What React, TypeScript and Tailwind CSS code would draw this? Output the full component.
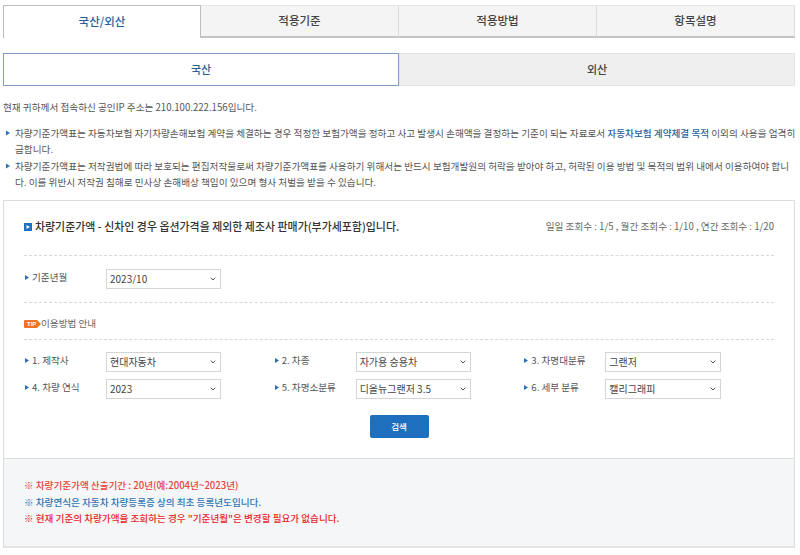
import { ChevronDown } from 'lucide-react';

const font = "font-['Noto_Sans_CJK_KR','Noto_Sans',sans-serif]";

function Arrow() {
  return (
    <svg width="4" height="6" viewBox="0 0 4 6" className="mr-[3px] shrink-0">
      <path d="M0 0.5 L4 3 L0 5.5 Z" fill="#2a6fb8" />
    </svg>
  );
}

function Pick({ value, wide }: { value: string; wide?: boolean }) {
  return (
    <div className={`relative h-5 shrink-0 ${wide ? 'w-[116px]' : 'w-[115px]'}`}>
      <select
        defaultValue={value}
        className="block h-full w-full appearance-none rounded-none border border-[#d5d5d5] bg-white pl-[3px] text-[10px] leading-none text-[#444] outline-none"
      >
        <option>{value}</option>
      </select>
      <ChevronDown className="pointer-events-none absolute right-[4px] top-[6px] size-[8px] text-[#555]" strokeWidth={3} />
    </div>
  );
}

function Field({ label, value, wide }: { label: string; value: string; wide?: boolean }) {
  return (
    <div className="flex w-[250px] items-center">
      <div className="flex w-[81px] shrink-0 -translate-y-[1.5px] items-center text-[9.6px] text-[#555]">
        <Arrow />
        {label}
      </div>
      <Pick value={value} wide={wide} />
    </div>
  );
}

const tabs = ['적용기준', '적용방법', '항목설명'];

export default function App() {
  return (
    <div className={`${font} h-[555px] w-[800px] overflow-hidden bg-white pl-[3px] pr-[5px] pt-[5px] text-[#555]`}>
      <div className="flex h-[33px] text-[11.5px] font-medium">
        <div className="flex w-[198px] items-center justify-center border-x border-t border-[#bdbdbd] bg-white text-[#2a5f9e]">
          국산/외산
        </div>
        {tabs.map((t) => (
          <div
            key={t}
            className="flex flex-1 items-center justify-center border-b-2 border-r border-t border-b-[#c4c4c4] border-r-[#dcdcdc] border-t-[#e6e6e6] bg-[#f4f4f4] text-[#444]"
          >
            {t}
          </div>
        ))}
      </div>

      <div className="mt-[15px] flex h-[33px] text-[11px] font-medium">
        <div className="flex w-[396px] items-center justify-center border border-[#7f9fc6] bg-white text-[#2a5f9e]">국산</div>
        <div className="flex flex-1 items-center justify-center border border-[#e4e4e4] bg-[#efefef] text-[#444]">외산</div>
      </div>

      <p className="mt-[13px] text-[9.65px] leading-[16px]">현재 귀하께서 접속하신 공인IP 주소는 210.100.222.156입니다.</p>

      <div className="mt-[10px] text-[9.65px] leading-[16.4px]">
        <div className="relative pl-3 whitespace-nowrap">
          <span className="absolute left-[3px] top-[5px]"><Arrow /></span>
          차량기준가액표는 자동차보험 자기차량손해보험 계약을 체결하는 경우 적정한 보험가액을 정하고 사고 발생시 손해액을 결정하는 기준이 되는 자료로서{' '}
          <b className="font-medium text-[#2a5f9e]">자동차보험 계약체결 목적</b> 이외의 사용을 엄격히
          <br />
          금합니다.
        </div>
        <div className="relative pl-3 whitespace-nowrap">
          <span className="absolute left-[3px] top-[5px]"><Arrow /></span>
          차량기준가액표는 저작권법에 따라 보호되는 편집저작물로써 차량기준가액표를 사용하기 위해서는 반드시 보험개발원의 허락을 받아야 하고, 허락된 이용 방법 및 목적의 범위 내에서 이용하여야 합니
          <br />
          다. 이를 위반시 저작권 침해로 민사상 손해배상 책임이 있으며 형사 처벌을 받을 수 있습니다.
        </div>
      </div>

      <div className="mt-[9px] h-[348px] border border-[#dcdcdc] border-b-2 border-b-[#e4e4e4]">
        <div className="h-[257px] px-[20px]">
          <div className="flex h-[55px] items-center justify-between border-b border-dashed border-[#d8d8d8] pb-[2px]">
            <div className="flex items-center text-[10.95px] font-medium text-[#333]">
              <svg width="8" height="8" viewBox="0 0 8 8" className="mr-[3px]">
                <rect width="8" height="8" fill="#1f6fbf" />
                <path d="M2.5 2 L6 4 L2.5 6 Z" fill="#fff" />
              </svg>
              차량기준가액 - 신차인 경우 옵션가격을 제외한 제조사 판매가(부가세포함)입니다.
            </div>
            <div className="text-[9.65px] text-[#666]">일일 조회수 : 1/5 , 월간 조회수 : 1/10 , 연간 조회수 : 1/20</div>
          </div>

          <div className="flex h-[47px] items-center border-b border-dashed border-[#d8d8d8] pl-[1px]">
            <Field label="기준년월" value="2023/10" />
          </div>

          <div className="flex h-[37px] items-center border-b border-dashed border-[#d8d8d8] pt-[6px] text-[9.6px] text-[#666]">
            <span className="relative flex h-2 w-[17px] shrink-0 items-center">
              <svg width="17" height="8" viewBox="0 0 17 8">
                <path d="M1 0 H13 L17 4 L13 8 H1 Q0 8 0 7 V1 Q0 0 1 0 Z" fill="#f0741f" />
              </svg>
              <span className="absolute left-[3px] top-[1px] font-['Liberation_Sans',sans-serif] text-[6px] font-bold leading-[6px] text-white">TIP</span>
            </span>
            이용방법 안내
          </div>

          <div className="flex flex-col gap-[7px] pl-[1px] pt-[12px]">
            <div className="flex">
              <Field label="1. 제작사" value="현대자동차" />
              <Field label="2. 차종" value="자가용 승용차" />
              <Field label="3. 차명대분류" value="그랜저" wide />
            </div>
            <div className="flex">
              <Field label="4. 차량 연식" value="2023" />
              <Field label="5. 차명소분류" value="디올뉴그랜저 3.5" />
              <Field label="6. 세부 분류" value="캘리그래피" wide />
            </div>
          </div>

          <div className="mt-[16px] flex justify-center">
            <button className="h-[23px] w-[59px] rounded-[2px] bg-[#1f6fbf] text-[8.5px] font-medium text-white">검색</button>
          </div>
        </div>

        <div className="flex h-[88px] flex-col justify-center border-t border-[#dcdcdc] bg-[#f5f6f8] pl-[20px] text-[9.6px] font-medium leading-[16.5px]">
          <p className="text-[#e8433a]">※ 차량기준가액 산출기간 : 20년(예:2004년~2023년)</p>
          <p className="text-[#2f74b5]">※ 차량연식은 자동차 차량등록증 상의 최초 등록년도입니다.</p>
          <p className="text-[#e8262a]">※ 현재 기준의 차량가액을 조회하는 경우 "기준년월"은 변경할 필요가 없습니다.</p>
        </div>
      </div>
    </div>
  );
}
